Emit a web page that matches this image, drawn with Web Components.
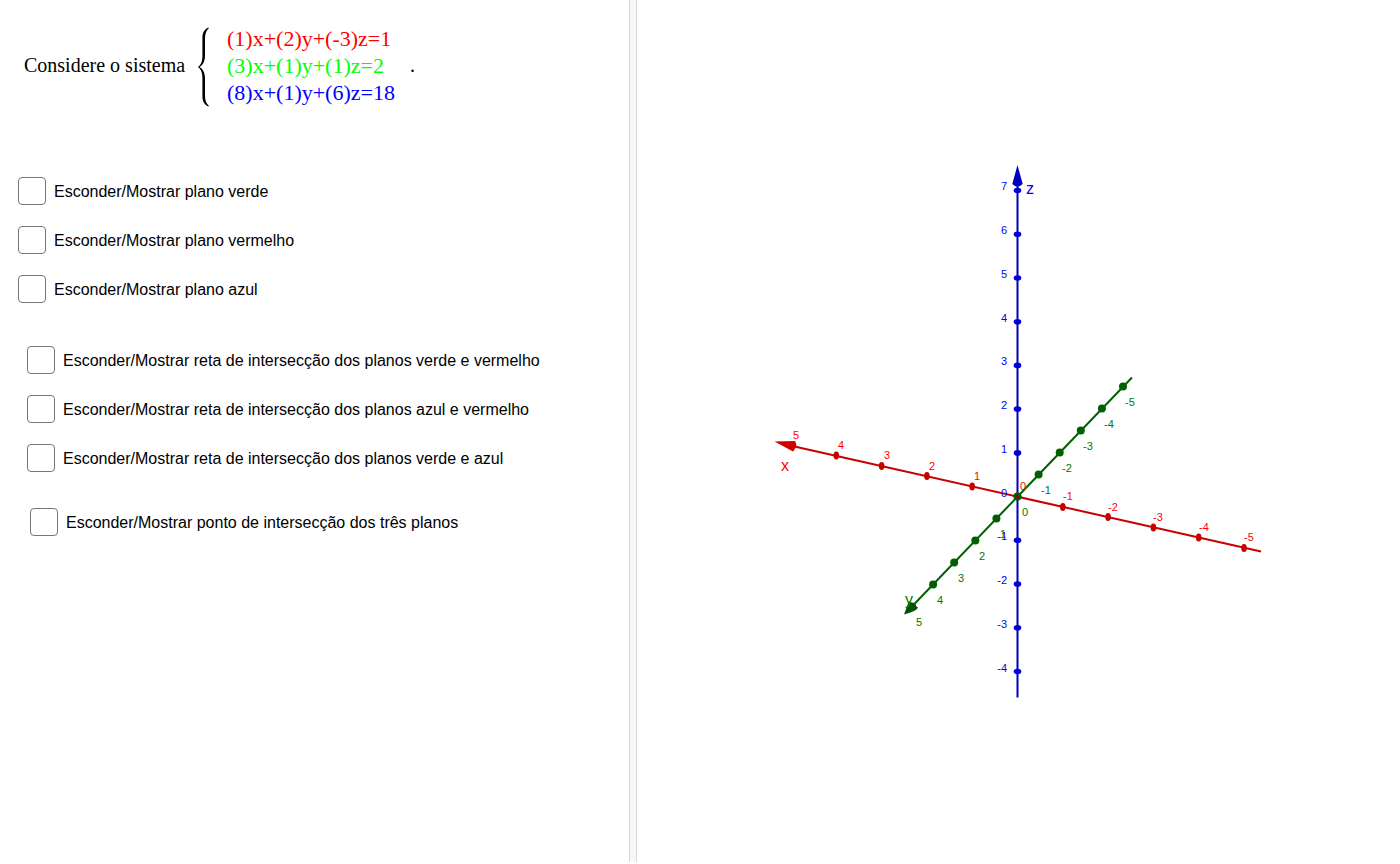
<!DOCTYPE html>
<html lang="pt">
<head>
<meta charset="utf-8">
<title>Sistema linear 3×3</title>
<style>
body { margin: 0; background: #fff; font-family: "Liberation Sans", Arial, sans-serif; font-size: 16px; color: #000; }
</style>
</head>
<body>
<geo-app></geo-app>
<script>
class GeoElement extends HTMLElement {
  constructor() {
    super();
    this.attachShadow({ mode: "open" });
  }
  connectedCallback() {
    this.shadowRoot.innerHTML = this.view();
  }
}

customElements.define("equation-system", class extends GeoElement {
  view() {
    return `<style>
      :host { display: flex; align-items: center; font-family: "Liberation Serif", "Times New Roman", serif; font-size: 20px; line-height: 27px; white-space: nowrap; }
      .lead { min-width: 165px; }
      svg { display: block; margin-left: 8px; margin-right: 17px; flex: none; overflow: visible; }
      .rows { display: flex; flex-direction: column; font-size: 22px; min-width: 183px; }
    </style>
    <span class="lead"><slot></slot></span>
    <svg width="13" height="80" viewBox="0 -1 13 80" aria-hidden="true">
      <path d="M11.5 .5C7 2.500 5.400 6 5.400 11V29C5.400 34.500 4 38 .8 40C4 42 5.400 45.500 5.400 51V69C5.400 74 7 77.500 11.500 79.500L11.800 78.800C9 76.500 8 73 8 68V51C8 45.500 5.500 41.500 2.500 40C5.500 38.500 8 34.500 8 29V12C8 7 9 3.500 11.800 1.200Z" fill="#000"/>
    </svg>
    <div class="rows"><slot name="row"></slot></div>
    <span><slot name="end"></slot></span>`;
  }
});

customElements.define("toggle-option", class extends GeoElement {
  view() {
    return `<style>
      :host { display: block; }
      label { display: flex; align-items: center; gap: 8px; line-height: 20px; width: fit-content; }
      span { padding-top: 2px; }
      input { appearance: none; box-sizing: border-box; flex: none; width: 28px; height: 28px; margin: 0; border: 1px solid #777; border-radius: 4px; background: #fff; }
      input:checked { background: #777; }
    </style>
    <label><input type="checkbox"><span><slot></slot></span></label>`;
  }
});

customElements.define("toggle-group", class extends GeoElement {
  view() {
    return `<style>
      :host { display: flex; flex-direction: column; gap: 21px; }
    </style><slot></slot>`;
  }
});

customElements.define("axes-view", class extends GeoElement {
  view() {
    const origin = [1017.5, 496.6];
    const at = (step, n) => [origin[0] + step[0] * n, origin[1] + step[1] * n];
    const X = [-45.3, -10.25], Y = [-21.1, 22], Z = [0, -43.73];
    const ticks = (step, from, to, rx, ry) => {
      let out = "";
      for (let n = from; n <= to; n++) {
        const [x, y] = at(step, n);
        out += `<ellipse cx="${x.toFixed(1)}" cy="${y.toFixed(1)}" rx="${rx}" ry="${ry}"/>`;
      }
      return out;
    };
    const labels = (step, from, to, dx, dy, anchor) => {
      let out = "";
      for (let n = from; n <= to; n++) {
        const [x, y] = at(step, n);
        out += `<text x="${Math.round(x + dx)}" y="${Math.round(y + dy)}" text-anchor="${anchor}">${n}</text>`;
      }
      return out;
    };
    return `<style>
      :host { display: block; }
      svg { display: block; width: 100%; height: 100%; }
      text { font-family: "Liberation Sans", Arial, sans-serif; font-size: 11px; }
      .name { font-size: 16px; }
      line { stroke-width: 2; }
    </style>
    <svg viewBox="637 0 763 862" role="img" aria-label="Eixos x, y e z">
      <g fill="#0000d8" stroke="none">
        <line x1="1017.5" y1="180" x2="1017.5" y2="697.5" stroke="#0000b8"/>
        ${ticks(Z, -4, 7, 3.8, 2.8)}
        <path d="M1017.5 165L1012.300 184Q1017.500 189 1022.700 184Z" fill="#0000c0"/>
      </g>
      <g fill="#c80000">
        <line x1="790" y1="445.500" x2="1261" y2="551.500" stroke="#c80000"/>
        ${ticks(X, -5, 5, 2.8, 4)}
        <path d="M774.500 441.500L795 441Q798 446 793 451.500Z" fill="#d00000"/>
      </g>
      <g fill="#006000">
        <line x1="910" y1="608.500" x2="1132" y2="377.500" stroke="#006000"/>
        ${ticks(Y, -5, 5, 4, 4)}
        <path d="M904 614.500L909 601L918 607.500Q917 611 904 614.500Z" fill="#005000"/>
      </g>
      <circle cx="1017.500" cy="496.500" r="1.800" fill="#900020"/>
      <g fill="#0000ff">${labels(Z, -4, 7, -10.5, 0, "end")}<text class="name" x="1026" y="194">z</text></g>
      <g fill="#ff0000">${labels(X, -5, 5, 5, -6.6, "middle")}<text class="name" x="781" y="471">x</text></g>
      <g fill="#007800">${labels(Y, -5, 5, 7, 19, "middle")}<text class="name" x="905" y="605">y</text></g>
    </svg>`;
  }
});

customElements.define("geo-app", class extends GeoElement {
  view() {
    return `<style>
      :host { display: flex; min-height: calc(100vh - 2px); margin-bottom: 2px; }
      .board { flex: 0 0 45%; margin-right: -1px; box-sizing: border-box; min-width: 0; padding-top: 25px; display: flex; flex-direction: column; }
      .divider { flex: none; width: 8px; box-sizing: border-box; border: solid #d8d8d8; border-width: 0 1px; background: #f7f7f7; }
      axes-view { flex: 1; min-width: 0; }
      equation-system { margin-left: 24px; }
      .planes { margin: 71px 0 0 18px; }
      .lines { margin: 43px 0 0 27px; }
      .point { margin: 36px 0 0 30px; }
      .red { color: #f00; } .green { color: #0f0; } .blue { color: #00f; }
    </style>
    <main class="board">
      <equation-system>Considere o sistema
        <span slot="row" class="red">(1)x+(2)y+(-3)z=1</span>
        <span slot="row" class="green">(3)x+(1)y+(1)z=2</span>
        <span slot="row" class="blue">(8)x+(1)y+(6)z=18</span>
        <span slot="end">.</span>
      </equation-system>
      <toggle-group class="planes">
        <toggle-option>Esconder/Mostrar plano verde</toggle-option>
        <toggle-option>Esconder/Mostrar plano vermelho</toggle-option>
        <toggle-option>Esconder/Mostrar plano azul</toggle-option>
      </toggle-group>
      <toggle-group class="lines">
        <toggle-option>Esconder/Mostrar reta de intersecção dos planos verde e vermelho</toggle-option>
        <toggle-option>Esconder/Mostrar reta de intersecção dos planos azul e vermelho</toggle-option>
        <toggle-option>Esconder/Mostrar reta de intersecção dos planos verde e azul</toggle-option>
      </toggle-group>
      <toggle-option class="point">Esconder/Mostrar ponto de intersecção dos três planos</toggle-option>
    </main>
    <div class="divider" role="separator"></div>
    <axes-view></axes-view>`;
  }
});
</script>
</body>
</html>
